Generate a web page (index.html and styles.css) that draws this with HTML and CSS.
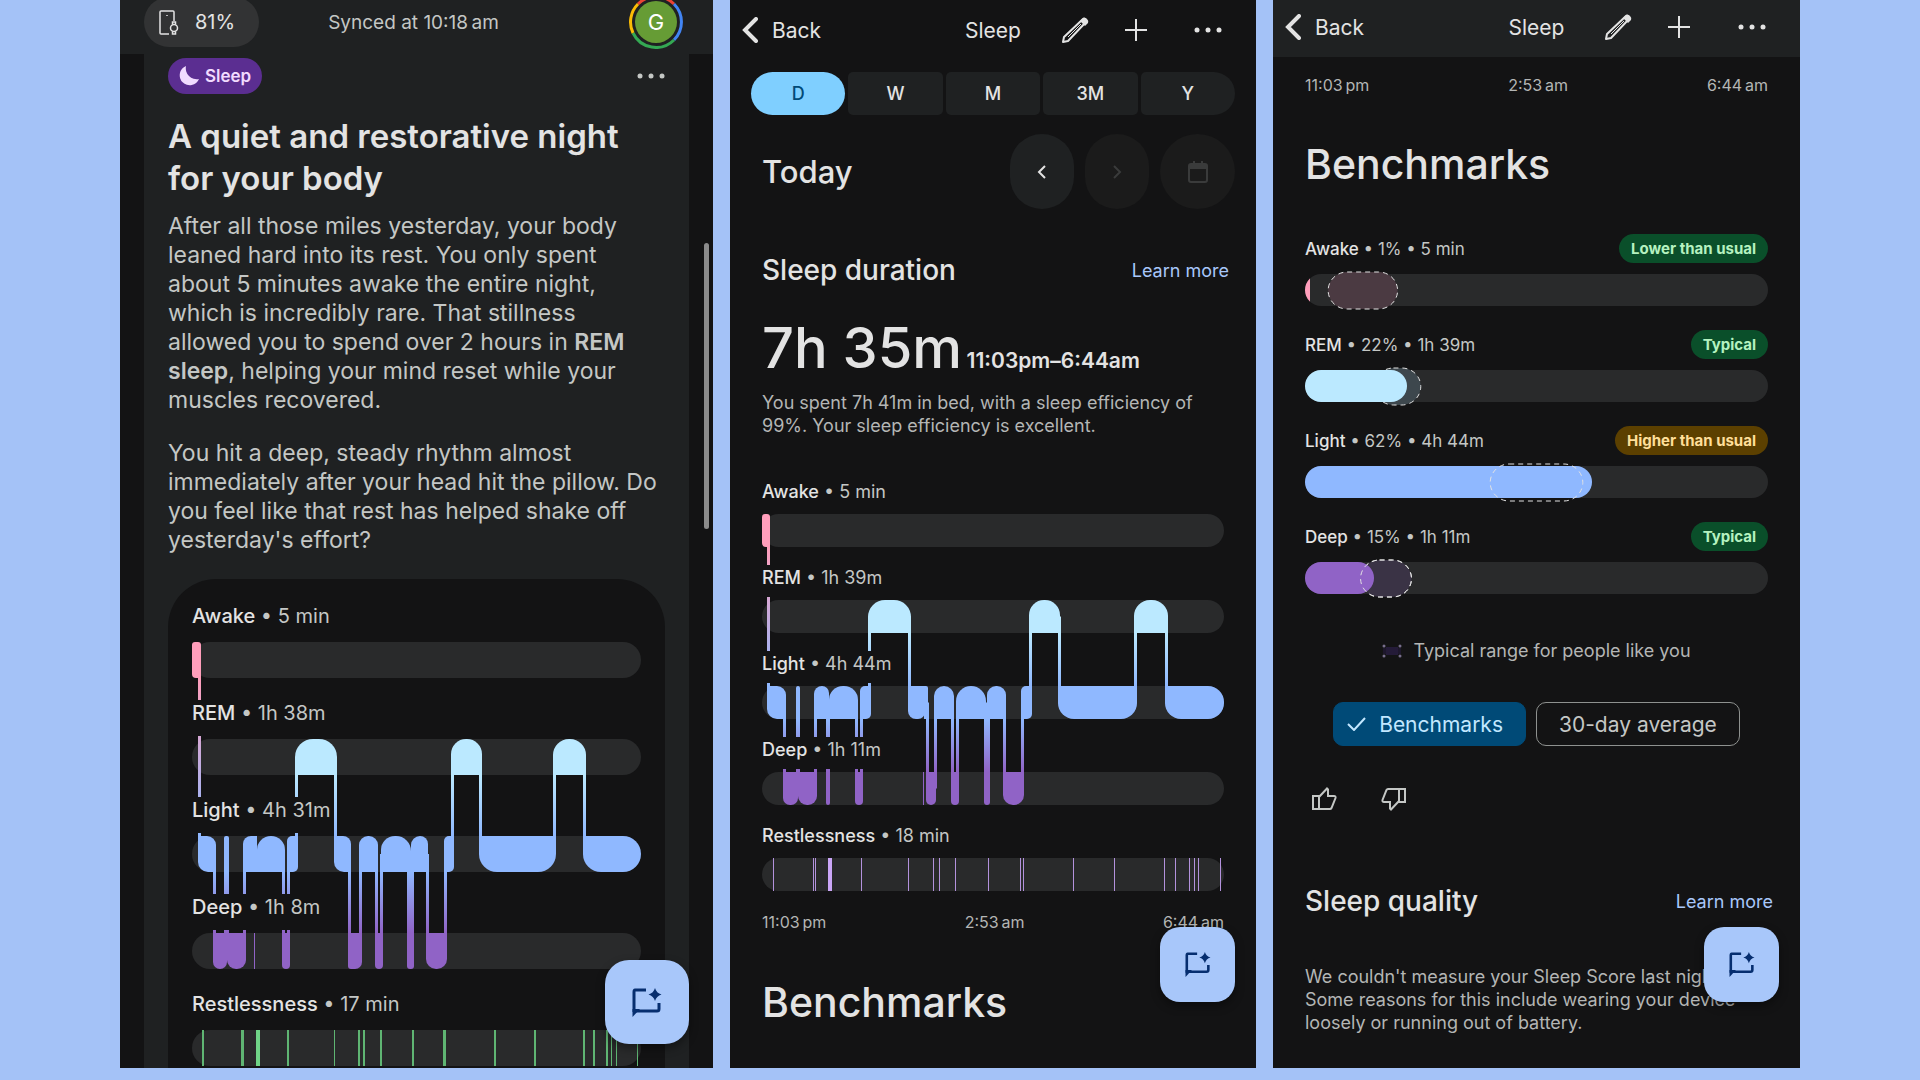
FILE: index.html
```html
<!DOCTYPE html>
<html lang="en">
<head>
    <meta charset="UTF-8">
    <meta name="viewport" content="width=device-width, initial-scale=1.0">
    <title>Sleep</title>
    <link rel="stylesheet" href="styles.css">
    <script src="charts.js" defer></script>
</head>
<body>
    <!-- shared icons -->
    <svg class="icon-defs" aria-hidden="true">
        <symbol id="icon-back" viewBox="0 0 16 26">
            <path d="M14 2L3 13l11 11" fill="none" stroke="currentColor" stroke-width="4" stroke-linecap="round"/>
        </symbol>
        <symbol id="icon-pencil" viewBox="0 0 28 28">
            <path d="M2 26l1-5L22 3q1-1 2 0l1 1q1 1 0 2L7 25z" fill="none" stroke="currentColor" stroke-width="2" stroke-linejoin="round"/>
            <path d="M7 21L20 8" stroke="currentColor" stroke-width="1"/>
            <path d="M19 5l3-3q2-1 4 1t1 4l-3 3z" fill="currentColor"/>
        </symbol>
        <symbol id="icon-plus" viewBox="0 0 22 22">
            <path d="M11 0v22M0 11h22" stroke="currentColor" stroke-width="2"/>
        </symbol>
        <symbol id="icon-more" viewBox="0 0 28 6">
            <circle cx="3" cy="3" r="2.500" fill="currentColor"/>
            <circle cx="14" cy="3" r="2.500" fill="currentColor"/>
            <circle cx="25" cy="3" r="2.500" fill="currentColor"/>
        </symbol>
        <symbol id="icon-chat" viewBox="0 0 30 29">
            <path d="M14 2H3Q2 2 2 4v20M4 23h21q2 0 2-2v-6" fill="none" stroke="currentColor" stroke-width="3"/>
            <path d="M.5 29V21H8z" fill="currentColor"/>
            <path d="M23 0q1.400 5 6.500 6.500Q24.400 8 23 13q-1.400-5-6.500-6.500Q21.600 5 23 0z" fill="currentColor"/>
        </symbol>
        <symbol id="icon-thumb" viewBox="0 0 26 24">
            <path d="M2 9h6v13H2zM8 10l8-8.500 1 1V9h6q2 0 1.500 2l-4 10q-.5 1-1.500 1H8" fill="none" stroke="currentColor" stroke-width="2"/>
        </symbol>
    </svg>

    <main class="screens">
        <section class="phone">
            <header class="home-bar">
                <button class="battery">
                    <svg width="20" height="25" viewBox="0 0 20 25" fill="none" stroke="currentColor" stroke-width="1.500">
                        <path d="M10 24H2q-1 0-1-1V2q0-1 1-1h12q1 0 1 1v9"/>
                        <circle cx="15" cy="18" r="3.500"/>
                        <path d="M13.500 14v-2h3v2M13.500 22v2h3v-2M8 5v1"/>
                    </svg>
                    81%
                </button>
                <span class="synced">Synced at 10:18&thinsp;am</span>
                <button class="avatar">
                    <svg width="54" height="54" viewBox="0 0 54 54" fill="none" stroke-width="3">
                        <path d="M9 9A25.500 25.500 0 0 1 45 9" stroke="#e94335"/>
                        <path d="M45 9A25.500 25.500 0 0 1 45 45" stroke="#4285f4"/>
                        <path d="M45 45A25.500 25.500 0 0 1 4 38" stroke="#34a853"/>
                        <path d="M4 38A25.500 25.500 0 0 1 9 9" stroke="#fbbc05"/>
                    </svg>
                    <span>G</span>
                </button>
            </header>
            <article class="story">
                <div class="story-top">
                    <span class="sleep-chip">
                        <svg width="20" height="20" viewBox="0 0 20 20"><path d="M7 0A10 10 0 1 0 20 13 11 11 0 0 1 7 0z" fill="currentColor"/></svg>
                        Sleep
                    </span>
                    <button class="icon-btn" aria-label="More"><svg width="28" height="6"><use href="#icon-more"/></svg></button>
                </div>
                <h1>A quiet and restorative night<br>for your body</h1>
                <p>After all those miles yesterday, your body<br>leaned hard into its rest. You only spent<br>about 5 minutes awake the entire night,<br>which is incredibly rare. That stillness<br>allowed you to spend over 2 hours in <b>REM<br>sleep</b>, helping your mind reset while your<br>muscles recovered.</p>
                <p>You hit a deep, steady rhythm almost<br>immediately after your head hit the pillow. Do<br>you feel like that rest has helped shake off<br>yesterday's effort?</p>
                <div class="chart-card">
                    <div class="chart chart-large" data-night="summary">
                        <div class="stage"><div class="stage-label"><b>Awake</b> • 5 min</div><div class="track"></div></div>
                        <div class="stage"><div class="stage-label"><b>REM</b> • 1h 38m</div><div class="track"></div></div>
                        <div class="stage"><div class="stage-label"><b>Light</b> • 4h 31m</div><div class="track"></div></div>
                        <div class="stage"><div class="stage-label"><b>Deep</b> • 1h 8m</div><div class="track"></div></div>
                        <div class="stage"><div class="stage-label"><b>Restlessness</b> • 17 min</div><div class="track"></div></div>
                    </div>
                </div>
            </article>
            <div class="scroll-thumb"></div>
            <button class="fab fab-large" aria-label="Ask coach"><svg width="30" height="29"><use href="#icon-chat"/></svg></button>
        </section>

        <section class="phone">
            <header class="nav-bar">
                <button class="back"><svg width="16" height="26"><use href="#icon-back"/></svg>Back</button>
                <span class="nav-title">Sleep</span>
                <div class="nav-actions">
                    <button class="icon-btn" aria-label="Edit"><svg width="28" height="28"><use href="#icon-pencil"/></svg></button>
                    <button class="icon-btn" aria-label="Add"><svg width="22" height="22"><use href="#icon-plus"/></svg></button>
                    <button class="icon-btn" aria-label="More"><svg width="28" height="6"><use href="#icon-more"/></svg></button>
                </div>
            </header>
            <nav class="tabs">
                <button class="active">D</button>
                <button>W</button>
                <button>M</button>
                <button>3M</button>
                <button>Y</button>
            </nav>
            <div class="date-row">
                <h2>Today</h2>
                <button aria-label="Previous day"><svg width="10" height="14" viewBox="0 0 10 14"><path d="M8 1L2 7l6 6" fill="none" stroke="currentColor" stroke-width="2"/></svg></button>
                <button disabled aria-label="Next day"><svg width="10" height="14" viewBox="0 0 10 14"><path d="M2 1l6 6-6 6" fill="none" stroke="currentColor" stroke-width="2"/></svg></button>
                <button disabled class="calendar" aria-label="Pick a date"><svg width="20" height="22" viewBox="0 0 20 22"><path d="M3 2h2V0h2v2h6V0h2v2h2q3 0 3 3v14q0 3-3 3H3q-3 0-3-3V5q0-3 3-3zM2 8v11q0 1 1 1h14q1 0 1-1V8z" fill="currentColor" fill-rule="evenodd"/></svg></button>
            </div>
            <div class="section-head">
                <h3>Sleep duration</h3>
                <a href="#">Learn more</a>
            </div>
            <div class="duration"><strong>7h 35m</strong> <span>11:03pm–6:44am</span></div>
            <p class="note">You spent 7h 41m in bed, with a sleep efficiency of<br>99%. Your sleep efficiency is excellent.</p>
            <div class="chart" data-night="detail">
                <div class="stage"><div class="stage-label"><b>Awake</b> • 5 min</div><div class="track"></div></div>
                <div class="stage"><div class="stage-label"><b>REM</b> • 1h 39m</div><div class="track"></div></div>
                <div class="stage"><div class="stage-label"><b>Light</b> • 4h 44m</div><div class="track"></div></div>
                <div class="stage"><div class="stage-label"><b>Deep</b> • 1h 11m</div><div class="track"></div></div>
                <div class="stage"><div class="stage-label"><b>Restlessness</b> • 18 min</div><div class="track"></div></div>
            </div>
            <div class="times"><span>11:03&thinsp;pm</span><span>2:53&thinsp;am</span><span>6:44&thinsp;am</span></div>
            <h2 class="big-title">Benchmarks</h2>
            <button class="fab" aria-label="Ask coach"><svg width="26" height="25"><use href="#icon-chat"/></svg></button>
        </section>

        <section class="phone">
            <header class="nav-bar nav-raised">
                <button class="back"><svg width="16" height="26"><use href="#icon-back"/></svg>Back</button>
                <span class="nav-title">Sleep</span>
                <div class="nav-actions">
                    <button class="icon-btn" aria-label="Edit"><svg width="28" height="28"><use href="#icon-pencil"/></svg></button>
                    <button class="icon-btn" aria-label="Add"><svg width="22" height="22"><use href="#icon-plus"/></svg></button>
                    <button class="icon-btn" aria-label="More"><svg width="28" height="6"><use href="#icon-more"/></svg></button>
                </div>
            </header>
            <div class="times"><span>11:03&thinsp;pm</span><span>2:53&thinsp;am</span><span>6:44&thinsp;am</span></div>
            <h2 class="big-title">Benchmarks</h2>
            <div class="benchmarks">
                <div class="benchmark">
                    <div class="benchmark-label"><b>Awake</b> • 1% • 5 min</div>
                    <span class="badge">Lower than usual</span>
                    <div class="meter">
                        <div class="meter-track"><div class="sliver awake" style="width: 1%"></div></div>
                        <svg class="range"><rect x="5%" y="1" width="15%" height="37" rx="19" fill="#4b3a42"/></svg>
                    </div>
                </div>
                <div class="benchmark">
                    <div class="benchmark-label"><b>REM</b> • 22% • 1h 39m</div>
                    <span class="badge">Typical</span>
                    <div class="meter">
                        <div class="meter-track"></div>
                        <svg class="range"><rect x="15%" y="1" width="10%" height="37" rx="19" fill="#3d474d"/></svg>
                        <div class="fill rem" style="width: 22%"></div>
                    </div>
                </div>
                <div class="benchmark">
                    <div class="benchmark-label"><b>Light</b> • 62% • 4h 44m</div>
                    <span class="badge high">Higher than usual</span>
                    <div class="meter">
                        <div class="meter-track"></div>
                        <div class="fill light" style="width: 62%"></div>
                        <svg class="range"><rect x="40%" y="1" width="20%" height="37" rx="19" fill="none"/></svg>
                    </div>
                </div>
                <div class="benchmark">
                    <div class="benchmark-label"><b>Deep</b> • 15% • 1h 11m</div>
                    <span class="badge">Typical</span>
                    <div class="meter">
                        <div class="meter-track"></div>
                        <svg class="range"><rect x="12%" y="1" width="11%" height="37" rx="19" fill="#3a3345"/></svg>
                        <div class="fill deep" style="width: 15%"></div>
                        <svg class="range"><rect x="12%" y="1" width="11%" height="37" rx="19" fill="none"/></svg>
                    </div>
                </div>
            </div>
            <div class="legend">
                <svg width="20" height="14" viewBox="0 0 20 14">
                    <path d="M4 3h12v8H4z" fill="#241b38"/>
                    <path d="M1 4h3v6H1zM16 4h3v6h-3z" fill="#1d172b"/>
                    <g fill="#776e8c"><circle cx="2" cy="2" r="1.500"/><circle cx="18" cy="2" r="1.500"/><circle cx="2" cy="12" r="1.500"/><circle cx="18" cy="12" r="1.500"/></g>
                </svg>
                Typical range for people like you
            </div>
            <div class="choices">
                <button class="choice selected"><svg width="19" height="14" viewBox="0 0 19 14"><path d="M1 7l6 6L18 1" fill="none" stroke="currentColor" stroke-width="2"/></svg>Benchmarks</button>
                <button class="choice">30-day average</button>
            </div>
            <div class="feedback">
                <button class="icon-btn" aria-label="Good"><svg width="26" height="24"><use href="#icon-thumb"/></svg></button>
                <button class="icon-btn thumb-down" aria-label="Bad"><svg width="26" height="24"><use href="#icon-thumb"/></svg></button>
            </div>
            <div class="section-head">
                <h3>Sleep quality</h3>
                <a href="#">Learn more</a>
            </div>
            <p class="note quality-note">We couldn't measure your Sleep Score last night.<br>Some reasons for this include wearing your device<br>loosely or running out of battery.</p>
            <button class="fab" aria-label="Ask coach"><svg width="26" height="25"><use href="#icon-chat"/></svg></button>
        </section>
    </main>
</body>
</html>
```
FILE: styles.css
```css
* {
    box-sizing: border-box;
}
body {
    margin: 0;
    background: #a4c2f7;
    color: #e3e3e3;
    font-family: Inter, "Liberation Sans", sans-serif;
}
h1, h2, h3, p {
    margin: 0;
    font-weight: 500;
}
button {
    border: none;
    padding: 0;
    background: none;
    color: inherit;
    font: inherit;
    cursor: pointer;
}
svg {
    display: block;
}
.icon-defs {
    position: absolute;
    width: 0;
    height: 0;
}
.screens {
    display: grid;
    grid-template-columns: 593fr 526fr 527fr;
    gap: 17px;
    height: 100vh;
    padding: 0 120px 12px;
}
.phone {
    position: relative;
    overflow: hidden;
    background: #131314;
}
.icon-btn {
    display: flex;
    align-items: center;
}

/* first screen */
.home-bar {
    display: grid;
    grid-template-columns: 1fr auto 1fr;
    grid-template-rows: 44px;
    align-items: center;
    height: 54px;
    padding: 0 30px 0 24px;
    background: #1f2122;
}
.battery {
    display: flex;
    align-items: center;
    justify-self: start;
    gap: 16px;
    height: 50px;
    padding: 0 24px 0 15px;
    border-radius: 25px;
    background: #323334;
    font-size: 20px;
}
.synced {
    color: #c4c7c5;
    font-size: 19px;
}
.avatar {
    display: grid;
    place-items: center;
    justify-self: end;
}
.avatar > * {
    grid-area: 1 / 1;
}
.avatar span {
    width: 42px;
    line-height: 42px;
    border-radius: 50%;
    background: #669c35;
    color: #fff;
    font-size: 22px;
}
.story {
    margin: 0 24px;
    padding: 4px 24px 0;
    background: #1f2122;
}
.story-top {
    display: flex;
    justify-content: space-between;
    align-items: center;
    color: #c4c7c5;
}
.sleep-chip {
    display: flex;
    align-items: center;
    gap: 6px;
    height: 36px;
    padding: 0 11px;
    border-radius: 18px;
    background: #5b2e91;
    color: #f1dbff;
    font-size: 17px;
    font-weight: 600;
}
.story h1 {
    margin: 21px 0 13px;
    font-size: 33px;
    line-height: 42px;
    font-weight: 600;
    white-space: nowrap;
}
.story p {
    margin-bottom: 24px;
    color: #c4c7c5;
    font-size: 23px;
    line-height: 29px;
    font-weight: 400;
    white-space: nowrap;
}
.story p b {
    font-weight: 600;
}
.chart-card {
    padding: 24px;
    border-radius: 48px 48px 0 0;
    background: #131314;
}
.scroll-thumb {
    position: absolute;
    top: 243px;
    right: 4px;
    width: 5px;
    height: 286px;
    border-radius: 3px;
    background: #8b8b8b;
}

/* stage charts */
.chart {
    position: relative;
    margin: 0 32px;
}
.stage {
    padding-bottom: 18px;
}
.stage-label {
    position: relative;
    z-index: 1;
    width: fit-content;
    height: 32px;
    margin-bottom: 3px;
    background: #131314;
    color: #c4c7c5;
    font-size: 18px;
    line-height: 25px;
}
.stage-label b {
    color: #e3e3e3;
    font-weight: 500;
}
.track {
    height: 33px;
    border-radius: 17px;
    background: #292a2b;
}
.chart > svg {
    position: absolute;
    top: 0;
    left: 0;
    width: 100%;
}
.chart-large {
    margin: 0;
}
.chart-large .stage {
    padding-bottom: 22px;
}
.chart-large .stage-label {
    height: 36px;
    font-size: 20px;
    line-height: 27px;
}
.chart-large .track {
    height: 36px;
    border-radius: 18px;
}
.times {
    display: flex;
    justify-content: space-between;
    margin: 0 32px;
    color: #b4b6b5;
    font-size: 16px;
    line-height: 20px;
}
.fab {
    position: absolute;
    right: 21px;
    bottom: 66px;
    z-index: 2;
    display: flex;
    justify-content: center;
    align-items: center;
    width: 75px;
    height: 75px;
    border-radius: 20px;
    background: #a8c7fa;
    color: #062e6f;
    box-shadow: 0 4px 10px rgba(0, 0, 0, 0.4);
}
.fab-large {
    right: 24px;
    bottom: 24px;
    width: 84px;
    height: 84px;
    border-radius: 24px;
}

/* navigation */
.nav-bar {
    display: grid;
    grid-template-columns: 1fr auto 1fr;
    align-items: center;
    height: 60px;
    font-size: 21px;
}
.nav-raised {
    height: 57px;
    padding-bottom: 3px;
    background: #1f2122;
}
.back {
    display: flex;
    align-items: center;
    gap: 14px;
    padding-left: 12px;
}
.nav-actions {
    display: flex;
    align-items: center;
    gap: 36px;
    padding: 0 34px 0 40px;
}
.nav-actions .icon-btn:last-child {
    margin-left: auto;
}
.tabs {
    display: grid;
    grid-template-columns: repeat(5, 1fr);
    gap: 3px;
    margin: 12px 21px 19px;
}
.tabs button {
    height: 43px;
    border-radius: 5px;
    background: #1f2122;
    font-size: 18px;
    font-weight: 500;
}
.tabs button:last-child {
    border-radius: 5px 22px 22px 5px;
}
.tabs .active {
    border-radius: 22px;
    background: #7fcfff;
    color: #004a77;
}
.date-row {
    display: flex;
    align-items: center;
    gap: 11px;
    margin: 0 21px 0 32px;
}
.date-row h2 {
    flex: 1;
    font-size: 31px;
}
.date-row button {
    display: flex;
    justify-content: center;
    align-items: center;
    width: 64px;
    height: 75px;
    border-radius: 32px;
    background: #1f2122;
}
.date-row button:disabled {
    background: #1b1b1b;
    color: #3a3b3b;
}
.date-row .calendar {
    width: 75px;
    border-radius: 38px;
}
.section-head {
    display: flex;
    justify-content: space-between;
    align-items: center;
    margin: 43px 27px 0 32px;
}
.section-head h3 {
    font-size: 28px;
    line-height: 36px;
}
.section-head a {
    color: #a8c7fa;
    font-size: 18px;
    text-decoration: none;
}
.duration {
    margin: 32px 32px 0;
    line-height: 56px;
    white-space: nowrap;
}
.duration strong {
    font-size: 56px;
    font-weight: 500;
}
.duration span {
    font-size: 21px;
    font-weight: 600;
}
.note {
    margin: 1px 32px 42px;
    color: #b4b6b5;
    font-size: 18px;
    line-height: 23px;
    font-weight: 400;
    white-space: nowrap;
}
.chart + .times {
    margin-top: 3px;
}
.big-title {
    margin: 45px 32px 0;
    font-size: 41px;
    line-height: 50px;
}

/* benchmarks */
.nav-raised + .times {
    margin-top: 18px;
}
.nav-raised ~ .big-title {
    margin-top: 44px;
}
.benchmarks {
    display: grid;
    gap: 24px;
    margin: 45px 32px 0;
}
.benchmark {
    display: grid;
    grid-template-columns: 1fr auto;
    align-items: center;
    row-gap: 11px;
}
.benchmark-label {
    color: #c4c7c5;
    font-size: 17px;
}
.benchmark-label b {
    color: #e3e3e3;
    font-weight: 500;
}
.badge {
    padding: 0 12px;
    border-radius: 15px;
    background: #0a4f2a;
    color: #b5f2c0;
    font-size: 15px;
    line-height: 29px;
    font-weight: 700;
}
.badge.high {
    background: #5c4000;
    color: #ffdf99;
}
.meter {
    position: relative;
    grid-column: 1 / 3;
}
.meter-track {
    height: 32px;
    border-radius: 16px;
    overflow: hidden;
    background: #292a2b;
}
.sliver {
    height: 32px;
}
.fill {
    position: absolute;
    top: 0;
    left: 0;
    height: 32px;
    border-radius: 16px;
}
.range {
    position: absolute;
    top: -3px;
    left: 0;
    width: 100%;
    height: 39px;
}
.range rect {
    stroke: #e3e3e3;
    stroke-width: 1;
    stroke-dasharray: 5 4;
}
.awake { background: #ff9ebb; }
.rem { background: #bbe9ff; }
.light { background: #8fb8ff; }
.deep { background: #9063c6; }
.legend {
    display: flex;
    justify-content: center;
    align-items: center;
    gap: 11px;
    margin-top: 44px;
    color: #b4b6b5;
    font-size: 18px;
    line-height: 26px;
}
.choices {
    display: flex;
    justify-content: center;
    gap: 10px;
    margin-top: 38px;
}
.choice {
    display: flex;
    align-items: center;
    gap: 13px;
    height: 44px;
    padding: 0 22px;
    border: 1px solid #8e918f;
    border-radius: 10px;
    color: #c4c7c5;
    font-size: 21px;
}
.choice.selected {
    padding-left: 13px;
    border-color: #004a77;
    background: #004a77;
    color: #c2e7ff;
}
.feedback {
    display: flex;
    gap: 44px;
    margin: 41px 38px 0;
    color: #c4c7c5;
}
.thumb-down {
    transform: rotate(180deg);
}
.feedback + .section-head {
    margin-top: 72px;
}
.quality-note {
    margin-top: 46px;
}
```
FILE: charts.js
```js
const colors = { awake: "#ff9ebb", rem: "#bbe9ff", light: "#8fb8ff", deep: "#9063c6" };
const rows = ["awake", "rem", "light", "deep", "rest"];

// segments: [stage, start, end, radius of top-left, top-right, bottom-right, bottom-left]
// links: [x, width, from, to]
// marks: [x, width]
const nights = {
    summary: {
        width: 449, first: 39, step: 97, bar: 36, mark: "#5fb573", bright: "#6fd487",
        segments: [
            ["awake", 0, 9, 3, 3, 0, 4],
            ["rem", 103, 145, 18, 18, 0, 0], ["rem", 259, 290, 15, 15, 0, 0], ["rem", 361, 394, 16, 16, 0, 0],
            ["light", 6, 24, 0, 9, 0, 10], ["light", 32, 37, 2, 2, 0, 0],
            ["light", 51, 65, 8, 0, 0, 0], ["light", 65, 93, 14, 14, 0, 0], ["light", 95, 106, 5, 0, 5, 0],
            ["light", 142, 159, 0, 8, 0, 10], ["light", 167, 186, 9, 9, 0, 0], ["light", 189, 219, 14, 15, 0, 0],
            ["light", 219, 236, 9, 8, 0, 0], ["light", 252, 262, 5, 0, 5, 0],
            ["light", 287, 364, 0, 0, 18, 18], ["light", 391, 449, 0, 18, 18, 18],
            ["deep", 21, 35, 0, 0, 7, 7], ["deep", 35, 54, 0, 0, 9, 9], ["deep", 62, 63, 0, 0, 0, 0],
            ["deep", 90, 98, 0, 0, 4, 4], ["deep", 156, 170, 0, 0, 7, 3], ["deep", 183, 191, 0, 0, 4, 4],
            ["deep", 215, 222, 0, 0, 3, 3], ["deep", 234, 255, 0, 0, 10, 10]
        ],
        links: [
            [6, 3, "awake", "light"],
            [103, 3, "rem", "light"], [142, 3, "rem", "light"], [259, 3, "rem", "light"],
            [287, 3, "rem", "light"], [361, 3, "rem", "light"], [391, 3, "rem", "light"],
            [21, 3, "light", "deep"], [32, 5, "light", "deep"], [51, 3, "light", "deep"],
            [90, 3, "light", "deep"], [95, 3, "light", "deep"], [156, 3, "light", "deep"],
            [167, 3, "light", "deep"], [183, 3, "light", "deep"], [188, 3, "light", "deep"],
            [215, 7, "light", "deep"], [234, 3, "light", "deep"], [252, 3, "light", "deep"]
        ],
        marks: [[10, 2], [49, 3], [64, 4], [95, 2], [142, 1], [166, 2], [171, 2], [188, 2], [220, 2],
            [251, 3], [302, 2], [342, 2], [391, 2], [401, 2], [414, 2], [419, 1], [424, 1], [445, 1]]
    },
    detail: {
        width: 462, first: 35, step: 86, bar: 33, mark: "#b392dd", bright: "#caa6f7",
        segments: [
            ["awake", 0, 8, 3, 3, 0, 4],
            ["rem", 106, 149, 17, 17, 0, 0], ["rem", 267, 298, 15, 15, 0, 0], ["rem", 372, 406, 16, 16, 0, 0],
            ["light", 5, 24, 0, 9, 0, 10], ["light", 34, 38, 2, 2, 0, 0],
            ["light", 52, 67, 8, 7, 0, 0], ["light", 67, 96, 14, 14, 0, 0], ["light", 98, 109, 5, 0, 5, 0],
            ["light", 146, 163, 0, 0, 7, 8], ["light", 162, 166, 0, 2, 0, 0],
            ["light", 172, 192, 10, 10, 0, 0], ["light", 194, 224, 15, 15, 0, 0], ["light", 225, 244, 9, 9, 0, 0],
            ["light", 259, 270, 5, 0, 5, 0], ["light", 296, 375, 0, 0, 16, 16], ["light", 403, 462, 0, 16, 16, 16],
            ["deep", 21, 36, 0, 0, 7, 7], ["deep", 36, 55, 0, 0, 9, 9], ["deep", 64, 68, 0, 0, 2, 2],
            ["deep", 93, 101, 0, 0, 4, 4], ["deep", 161, 162, 0, 0, 0, 0], ["deep", 164, 174, 0, 0, 5, 5],
            ["deep", 189, 197, 0, 0, 4, 4], ["deep", 222, 228, 0, 0, 3, 3], ["deep", 241, 262, 0, 0, 10, 10]
        ],
        links: [
            [5, 3, "awake", "light"],
            [106, 3, "rem", "light"], [146, 3, "rem", "light"], [267, 3, "rem", "light"],
            [296, 3, "rem", "light"], [372, 3, "rem", "light"], [403, 3, "rem", "light"],
            [21, 3, "light", "deep"], [34, 4, "light", "deep"], [52, 3, "light", "deep"],
            [64, 4, "light", "deep"], [93, 3, "light", "deep"], [98, 3, "light", "deep"],
            [164, 3, "light", "deep"], [172, 3, "light", "deep"], [189, 3, "light", "deep"],
            [194, 3, "light", "deep"], [222, 6, "light", "deep"], [241, 3, "light", "deep"], [259, 3, "light", "deep"]
        ],
        marks: [[11, 1], [51, 1], [53, 1], [66, 4], [99, 1], [146, 1], [171, 1], [177, 1], [193, 1], [226, 1],
            [258, 1], [261, 1], [311, 1], [352, 1], [402, 1], [413, 1], [427, 1], [432, 1], [436, 1], [458, 1]]
    }
};

// the lower corners of a segment stay square where a link leaves it
function segmentPath(x0, x1, y0, y1, tl, tr, br, bl) {
    return `M${x0 + tl} ${y0}H${x1 - tr}A${tr} ${tr} 0 0 1 ${x1} ${y0 + tr}V${y1 - br}` +
        `A${br} ${br} 0 0 1 ${x1 - br} ${y1}H${x0 + bl}A${bl} ${bl} 0 0 1 ${x0} ${y1 - bl}V${y0 + tl}` +
        `A${tl} ${tl} 0 0 1 ${x0 + tl} ${y0}z`;
}

document.querySelectorAll(".chart").forEach(chart => {
    const name = chart.dataset.night;
    const night = nights[name];
    const top = stage => night.first + rows.indexOf(stage) * night.step;
    const height = top("rest") + night.bar;
    let defs = "";
    let shapes = "";

    [["awake", "light"], ["rem", "light"], ["light", "deep"]].forEach(([from, to]) => {
        defs += `<linearGradient id="${name}-${from}" gradientUnits="userSpaceOnUse" x1="0" x2="0" y1="${top(from) + night.bar}" y2="${top(to)}">
            <stop stop-color="${colors[from]}"/><stop offset="1" stop-color="${colors[to]}"/></linearGradient>`;
    });
    night.links.forEach(([x, w, from, to]) => {
        // start and end inside the bars so that rounded corners stay joined
        const y0 = top(from) + night.bar / 2;
        const y1 = top(to) + night.bar / 2;
        shapes += `<rect x="${x}" y="${y0}" width="${w}" height="${y1 - y0}" fill="url(#${name}-${from})"/>`;
    });
    night.segments.forEach(([stage, x0, x1, ...r]) => {
        shapes += `<path d="${segmentPath(x0, x1, top(stage), top(stage) + night.bar, ...r)}" fill="${colors[stage]}"/>`;
    });
    night.marks.forEach(([x, w]) => {
        shapes += `<rect x="${x}" y="${top("rest")}" width="${w}" height="${night.bar}" fill="${w > 3 ? night.bright : night.mark}"/>`;
    });
    chart.insertAdjacentHTML("beforeend",
        `<svg height="${height}" viewBox="0 0 ${night.width} ${height}" preserveAspectRatio="none">
            <defs>${defs}</defs>${shapes}</svg>`);
});
```
